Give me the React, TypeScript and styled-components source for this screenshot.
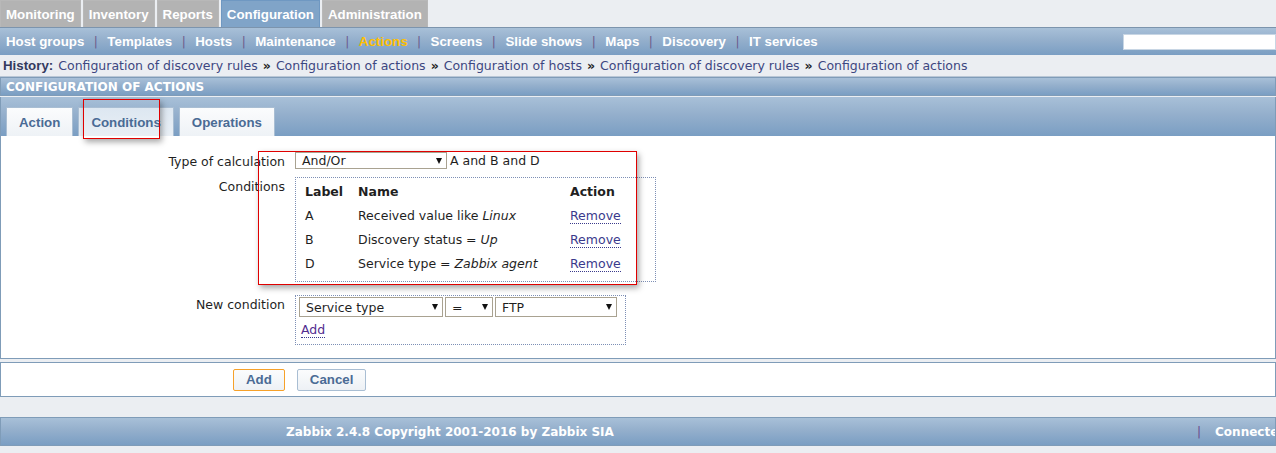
import React from 'react';
import styled, { createGlobalStyle, css } from 'styled-components';

const GlobalStyle = createGlobalStyle`
    html, body {
        margin: 0;
        padding: 0;
        background: #ebeef2;
        font-family: "DejaVu Sans", Verdana, sans-serif;
        font-size: 12.5px;
        color: #1f1f1f;
    }
`;

const blueBar = css`
    background: linear-gradient(to bottom, #a8c0d8 0%, #94afcc 45%, #7a9ec3 100%);
`;

const boldFace = css`
    font-family: "Liberation Sans", Arial, sans-serif;
    font-weight: bold;
    font-size: 13.3px;
`;

const Page = styled.div`
    width: 1276px;
    position: relative;
    overflow: hidden;
`;

const MainMenu = styled.div`
    display: flex;
    gap: 2px;
    height: 27px;
`;

const MainTab = styled.div<{ $active?: boolean }>`
    ${boldFace};
    display: flex;
    align-items: center;
    padding: 0 5px;
    height: 27px;
    box-sizing: border-box;
    color: #fff;
    background: ${p => (p.$active ? '#80a4c8' : '#b3b3b3')};
    border: 1px solid ${p => (p.$active ? '#6f98c2' : '#b8b8b8')};
    border-bottom: none;
`;

const SubMenu = styled.div`
    ${blueBar};
    height: 28px;
    box-sizing: border-box;
    border-top: 1px solid #7c94ad;
    display: flex;
    align-items: center;
    padding-left: 6px;
`;

const SubItem = styled.span<{ $active?: boolean }>`
    ${boldFace};
    color: ${p => (p.$active ? '#ffc000' : '#fff')};
`;

const SubSep = styled.span`
    color: #6b5a8c;
    font-size: 12px;
    margin: 0 9.5px;
`;

const Search = styled.input`
    margin-left: auto;
    width: 153px;
    height: 16px;
    box-sizing: border-box;
    border: 1px solid #c8d6e4;
    background: #fff;
    padding: 0;
`;

const History = styled.div`
    height: 21px;
    display: flex;
    align-items: center;
    padding: 0 3px;
    font-size: 12.5px;
    color: #3d4781;
    border-bottom: 1px solid #b9c7d6;
    white-space: nowrap;
`;

const HistoryLabel = styled.b`
    ${boldFace};
    color: #333a5e;
    margin-right: 5px;
`;

const Chevron = styled.b`
    color: #222;
    margin: 0 5px;
`;

const HeaderBar = styled.div`
    ${blueBar};
    height: 19px;
    box-sizing: border-box;
    border: 1px solid #7f9cb8;
    display: flex;
    align-items: center;
    padding-left: 5px;
    font-weight: bold;
    font-size: 12px;
    color: #fff;
`;

const FormBox = styled.div`
    border: 1px solid #7f9cb8;
    border-top: none;
    background: #fff;
    margin-top: 1px;
`;

const TabStrip = styled.div`
    ${blueBar};
    height: 39px;
    box-sizing: border-box;
    display: flex;
    align-items: flex-end;
    gap: 5px;
    padding-left: 5px;
`;

const FormTab = styled.div<{ $active?: boolean }>`
    ${boldFace};
    height: 29px;
    box-sizing: border-box;
    padding: 0 12px;
    display: flex;
    align-items: center;
    color: #4a6b95;
    background: ${p => (p.$active ? 'linear-gradient(#dde7f1, #e9eff5)' : 'linear-gradient(#fbfcfd, #eef2f6)')};
    border: 1px solid #a9bed3;
    border-bottom: none;
`;

const FormBody = styled.div`
    padding: 16px 0 13px;
`;

const FormRow = styled.div<{ $gap: number }>`
    display: grid;
    grid-template-columns: 284px 1fr;
    column-gap: 10px;
    margin-top: ${p => p.$gap}px;
    align-items: start;
`;

const Label = styled.div`
    text-align: right;
    padding-top: 2px;
    line-height: 15px;
`;

const Inline = styled.div<{ $gap: number }>`
    display: flex;
    align-items: center;
    gap: ${p => p.$gap}px;
`;

const SelectBox = styled.div<{ $w: number; $h: number }>`
    width: ${p => p.$w}px;
    height: ${p => p.$h}px;
    box-sizing: border-box;
    border: 1px solid #a9a291;
    background: #fff;
    display: flex;
    align-items: center;
    justify-content: space-between;
    padding: 0 4px 0 6px;
    &::after {
        content: '';
        border-left: 3px solid transparent;
        border-right: 3px solid transparent;
        border-top: 6px solid #111;
    }
`;

const DottedBox = styled.div<{ $w: number }>`
    width: ${p => p.$w}px;
    box-sizing: border-box;
    border: 1px dotted #7d8fb5;
    padding: 1px 3px 6px;
`;

const CondTable = styled.table`
    border-collapse: collapse;
    font-size: 12.5px;
    margin: 0 0 0 6px;
    td, th {
        text-align: left;
        padding: 0;
        height: 24px;
    }
`;

const DotLink = styled.span`
    color: #3a3a8c;
    border-bottom: 1px dotted #3a3a8c;
`;

const AddLink = styled(DotLink)`
    color: #522d8f;
    display: inline-block;
    margin-top: 5px;
    margin-left: 2px;
    line-height: 15px;
`;

const ButtonBar = styled.div`
    margin-top: 3px;
    height: 35px;
    box-sizing: border-box;
    background: #fff;
    border: 1px solid #7f9cb8;
    display: flex;
    align-items: center;
    gap: 12px;
    padding-left: 232px;
`;

const Button = styled.div<{ $focus?: boolean }>`
    ${boldFace};
    height: 22px;
    box-sizing: border-box;
    padding: 0 12px;
    display: flex;
    align-items: center;
    color: #4a6b95;
    background: linear-gradient(#fbfcfd, #edf1f5);
    border: 1px solid ${p => (p.$focus ? '#f6a12a' : '#a9bed3')};
    border-radius: 2px;
`;

const Footer = styled.div`
    ${blueBar};
    margin-top: 20px;
    height: 29px;
    box-sizing: border-box;
    border: 1px solid #7f9cb8;
    display: grid;
    grid-template-columns: 285px 911px 1fr;
    align-items: center;
    font-weight: bold;
    font-size: 12px;
    color: #fff;
    white-space: nowrap;
    overflow: hidden;
`;

const FooterSep = styled.span`
    color: #6b4a8c;
    font-weight: normal;
    margin-right: 14px;
`;

const Callout = styled.div<{ $x: number; $y: number; $w: number; $h: number }>`
    position: absolute;
    left: ${p => p.$x}px;
    top: ${p => p.$y}px;
    width: ${p => p.$w}px;
    height: ${p => p.$h}px;
    box-sizing: border-box;
    border: 1px solid #e00000;
    box-shadow: 2px 3px 6px rgba(0, 0, 0, 0.35);
    pointer-events: none;
`;

const mainTabs = ['Monitoring', 'Inventory', 'Reports', 'Configuration', 'Administration'];
const subItems = ['Host groups', 'Templates', 'Hosts', 'Maintenance', 'Actions', 'Screens', 'Slide shows', 'Maps', 'Discovery', 'IT services'];
const history = [
    'Configuration of discovery rules',
    'Configuration of actions',
    'Configuration of hosts',
    'Configuration of discovery rules',
    'Configuration of actions',
];
const conditions = [
    { label: 'A', name: 'Received value like ', value: 'Linux' },
    { label: 'B', name: 'Discovery status = ', value: 'Up' },
    { label: 'D', name: 'Service type = ', value: 'Zabbix agent' },
];

export default function App() {
    return (
        <Page>
            <GlobalStyle />
            <MainMenu>
                {mainTabs.map(t => (
                    <MainTab key={t} $active={t === 'Configuration'}>{t}</MainTab>
                ))}
            </MainMenu>
            <SubMenu>
                {subItems.map((s, i) => (
                    <React.Fragment key={s}>
                        {i > 0 && <SubSep>|</SubSep>}
                        <SubItem $active={s === 'Actions'}>{s}</SubItem>
                    </React.Fragment>
                ))}
                <Search />
            </SubMenu>
            <History>
                <HistoryLabel>History:</HistoryLabel>
                {history.map((h, i) => (
                    <React.Fragment key={i}>
                        {i > 0 && <Chevron>»</Chevron>}
                        <span>{h}</span>
                    </React.Fragment>
                ))}
            </History>
            <HeaderBar>CONFIGURATION OF ACTIONS</HeaderBar>
            <FormBox>
                <TabStrip>
                    <FormTab>Action</FormTab>
                    <FormTab $active>Conditions</FormTab>
                    <FormTab>Operations</FormTab>
                </TabStrip>
                <FormBody>
                    <FormRow $gap={0}>
                        <Label>Type of calculation</Label>
                        <Inline $gap={3}>
                            <SelectBox $w={152} $h={17}>And/Or</SelectBox>
                            <span>A and B and D</span>
                        </Inline>
                    </FormRow>
                    <FormRow $gap={8}>
                        <Label>Conditions</Label>
                        <DottedBox $w={361}>
                            <CondTable>
                                <thead>
                                    <tr>
                                        <th style={{ width: 53 }}>Label</th>
                                        <th style={{ width: 212 }}>Name</th>
                                        <th>Action</th>
                                    </tr>
                                </thead>
                                <tbody>
                                    {conditions.map(c => (
                                        <tr key={c.label}>
                                            <td>{c.label}</td>
                                            <td>{c.name}<i>{c.value}</i></td>
                                            <td><DotLink>Remove</DotLink></td>
                                        </tr>
                                    ))}
                                </tbody>
                            </CondTable>
                        </DottedBox>
                    </FormRow>
                    <FormRow $gap={13}>
                        <Label>New condition</Label>
                        <DottedBox $w={331}>
                            <Inline $gap={2}>
                                <SelectBox $w={144} $h={20}>Service type</SelectBox>
                                <SelectBox $w={48} $h={20}>=</SelectBox>
                                <SelectBox $w={122} $h={20}>FTP</SelectBox>
                            </Inline>
                            <AddLink>Add</AddLink>
                        </DottedBox>
                    </FormRow>
                </FormBody>
            </FormBox>
            <ButtonBar>
                <Button $focus>Add</Button>
                <Button>Cancel</Button>
            </ButtonBar>
            <Footer>
                <span />
                <span>Zabbix 2.4.8 Copyright 2001-2016 by Zabbix SIA</span>
                <span><FooterSep>|</FooterSep>Connected as 'Admin'</span>
            </Footer>
            <Callout $x={83} $y={99} $w={77} $h={40} />
            <Callout $x={258} $y={151} $w={379} $h={134} />
        </Page>
    );
}
